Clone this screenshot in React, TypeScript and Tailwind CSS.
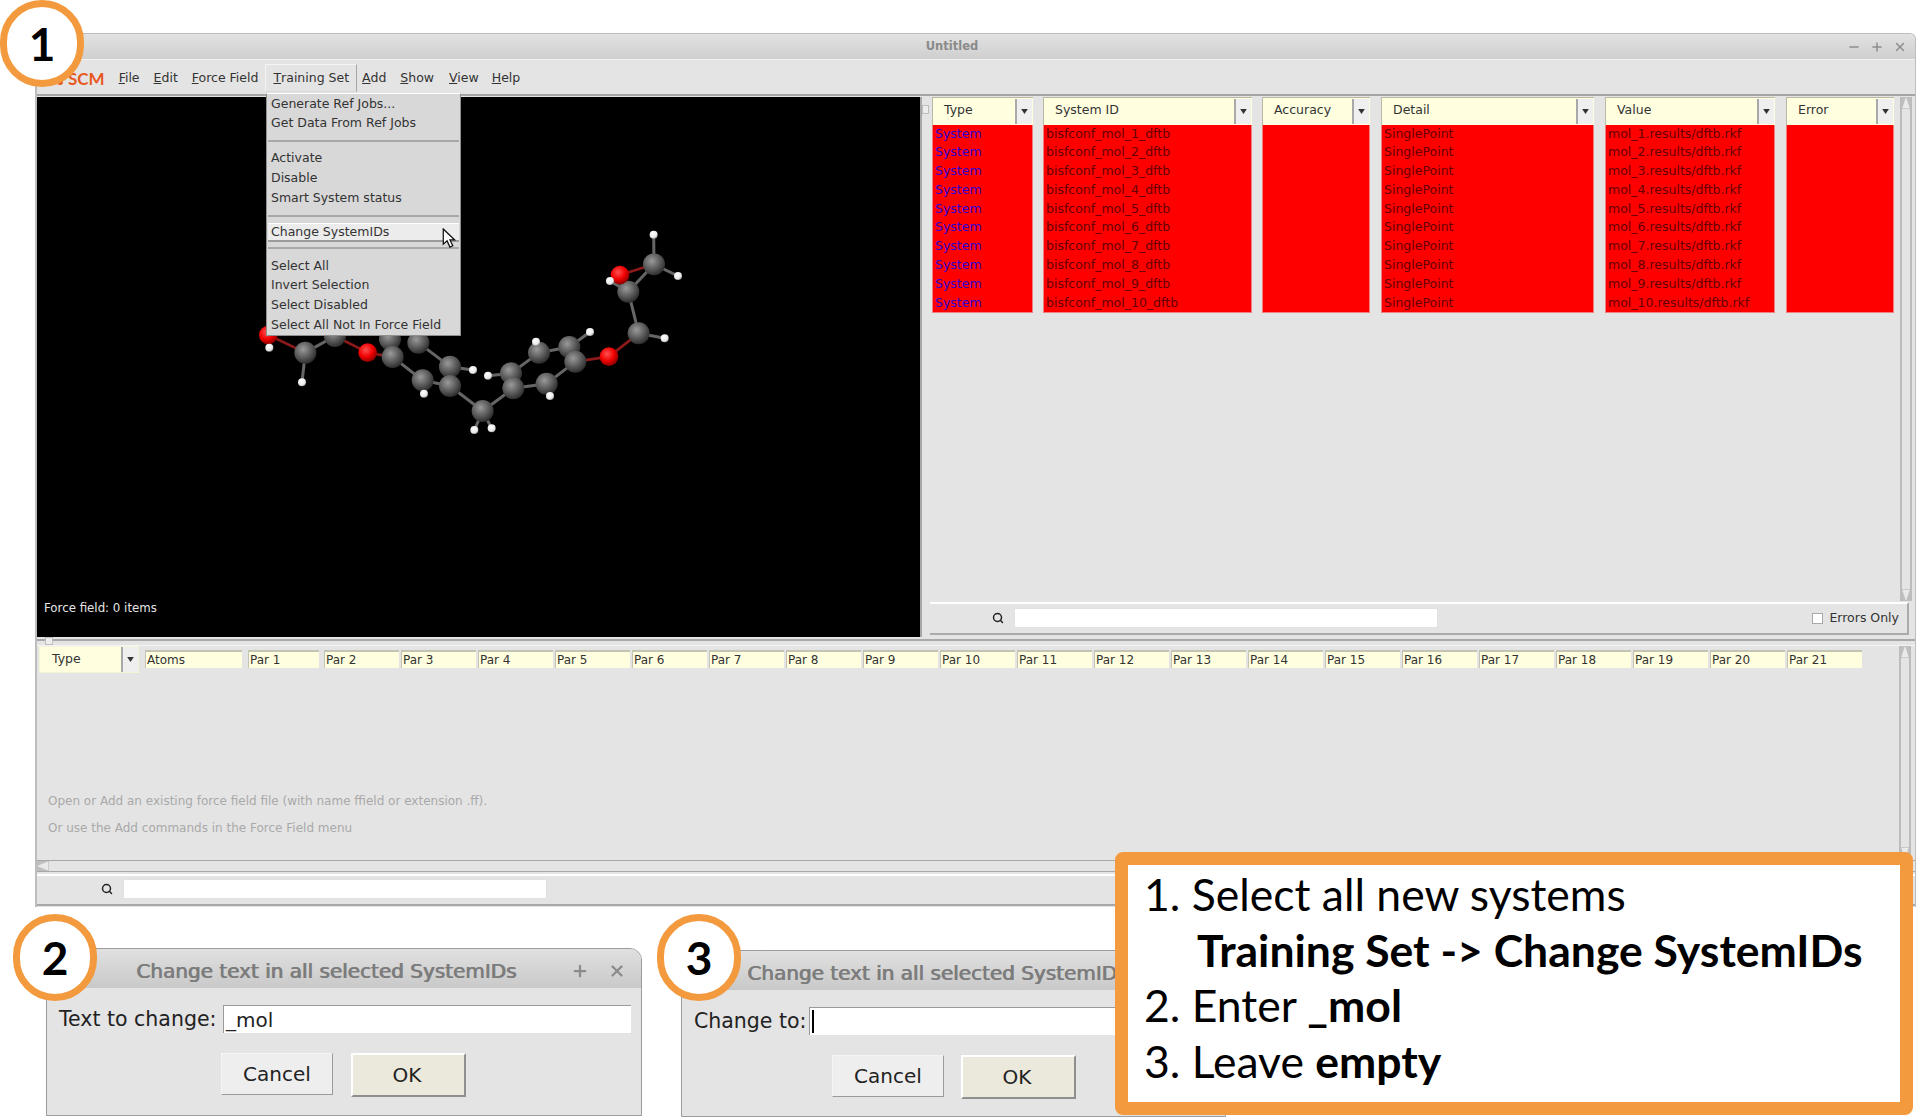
import React from 'react';
import { Search, Minus, Plus, X } from 'lucide-react';

const columns = [
  { label: 'Type', width: 'w-[101px]', gap: '', text: (i: number) => 'System', tone: 'text-[#2f00d0]' },
  { label: 'System ID', width: 'w-[209px]', gap: 'ml-[10px]', text: (i: number) => `bisfconf_mol_${i}_dftb`, tone: 'text-[#650000]' },
  { label: 'Accuracy', width: 'w-[108px]', gap: 'ml-[10px]', text: (i: number) => '', tone: 'text-[#650000]' },
  { label: 'Detail', width: 'w-[213px]', gap: 'ml-[11px]', text: (i: number) => 'SinglePoint', tone: 'text-[#650000]' },
  { label: 'Value', width: 'w-[170px]', gap: 'ml-[11px]', text: (i: number) => `mol_${i}.results/dftb.rkf`, tone: 'text-[#650000]' },
  { label: 'Error', width: 'w-[108px]', gap: 'ml-[11px]', text: (i: number) => '', tone: 'text-[#650000]' },
];

const rows = [1, 2, 3, 4, 5, 6, 7, 8, 9, 10];
const pars = Array.from({ length: 20 }, (_, i) => `Par ${i + 2}`);

const menuBar = [
  { first: 'F', rest: 'ile', cls: 'ml-[14px]' },
  { first: 'E', rest: 'dit', cls: 'ml-[14px]' },
  { first: 'F', rest: 'orce Field', cls: 'ml-[14px]' },
];
const menuBarRight = [
  { first: 'A', rest: 'dd', cls: 'ml-[5px]' },
  { first: 'S', rest: 'how', cls: 'ml-[14px]' },
  { first: 'V', rest: 'iew', cls: 'ml-[15px]' },
  { first: 'H', rest: 'elp', cls: 'ml-[13px]' },
];

const carbons = [
  [315, 405], [480, 415], [565, 425], [1272, 190], [1195, 272], [1226, 397], [1018, 438], [1036, 482], [927, 455], [950, 548],
  [843, 517], [850, 562], [758, 630], [660, 497], [660, 555], [578, 538], [488, 468], [226, 455],
];
const oxygens = [[1170, 222], [1137, 467], [413, 455], [115, 402]];
const hydrogens = [
  [1271, 101], [1344, 225], [1140, 240], [1304, 412], [1080, 393], [918, 422], [960, 585], [774, 524], [733, 687],
  [785, 682], [582, 578], [729, 507], [216, 544], [118, 440],
];
const greyBonds = [
  [1272, 190, 1271, 101], [1272, 190, 1344, 225], [1272, 190, 1195, 272], [1195, 272, 1140, 240], [1195, 272, 1226, 397],
  [1226, 397, 1304, 412], [1036, 482, 1018, 438], [1018, 438, 1080, 393], [1018, 438, 927, 455], [927, 455, 918, 422],
  [927, 455, 843, 517], [1036, 482, 950, 548], [950, 548, 960, 585], [950, 548, 850, 562], [843, 517, 850, 562],
  [843, 517, 774, 524], [850, 562, 758, 630], [758, 630, 733, 687], [758, 630, 785, 682], [758, 630, 660, 555],
  [660, 555, 660, 497], [660, 497, 729, 507], [660, 497, 565, 425], [660, 555, 578, 538], [578, 538, 582, 578],
  [578, 538, 488, 468], [488, 468, 480, 415], [226, 455, 216, 544], [226, 455, 315, 405], [115, 402, 118, 440],
];
const redBonds = [
  [1170, 222, 1272, 190], [1170, 222, 1195, 272], [1137, 467, 1226, 397], [1137, 467, 1036, 482], [413, 455, 315, 405],
  [413, 455, 488, 468], [115, 402, 226, 455],
];

function Triangle({ dir, className }: { dir: 'up' | 'down' | 'left'; className: string }) {
  const points = dir === 'up' ? '5.5,1 10,10 1,10' : dir === 'down' ? '1,1 10,1 5.5,10' : '10,1 10,10 1,5.5';
  return (
    <svg viewBox="0 0 11 11" preserveAspectRatio="none" className={`bg-[#bfbfbf] ${className}`} aria-hidden="true">
      <polygon points={points} fill="#e9e9e9" stroke="#f4f4f4" strokeWidth="0.6" />
    </svg>
  );
}

function HeaderArrow() {
  return (
    <div className="flex h-full w-[17px] shrink-0 items-center justify-center border-l-2 border-l-[#a9a9a9] bg-[#efefef]">
      <svg viewBox="0 0 8 6" className="h-[5px] w-[7px]" aria-hidden="true">
        <polygon points="0,0 8,0 4,6" fill="#333333" />
      </svg>
    </div>
  );
}

function TableColumn({ col }: { col: (typeof columns)[number] }) {
  return (
    <div className={`${col.width} ${col.gap} shrink-0`}>
      <div className="flex h-[28px] items-stretch border-t border-l border-[#b9b9a5] bg-[#ffffe0] py-[1px] pl-[11px] pr-[1px]">
        <div className="flex flex-1 items-center pb-[2px] text-[12.5px] text-[#333333]">{col.label}</div>
        <HeaderArrow />
      </div>
      <div className="h-[188px] border border-t-0 border-[#f08080] bg-[#ff0000] pl-[2px]">
        {rows.map((n) => (
          <div key={n} className={`h-[18.8px] whitespace-nowrap text-[12.5px] leading-[18.8px] ${col.tone}`}>
            {col.text(n)}
          </div>
        ))}
      </div>
    </div>
  );
}

function Molecule() {
  return (
    <svg viewBox="0 0 1440 720" className="absolute left-[193px] top-[104px] h-[240px] w-[480px]" aria-hidden="true">
      <defs>
        <radialGradient id="carbon" cx="40%" cy="35%" r="70%">
          <stop offset="0%" stopColor="#9a9a9a" />
          <stop offset="60%" stopColor="#555555" />
          <stop offset="100%" stopColor="#262626" />
        </radialGradient>
        <radialGradient id="oxygen" cx="40%" cy="35%" r="70%">
          <stop offset="0%" stopColor="#ff5050" />
          <stop offset="55%" stopColor="#f00000" />
          <stop offset="100%" stopColor="#7a0000" />
        </radialGradient>
        <radialGradient id="hydrogen" cx="40%" cy="35%" r="70%">
          <stop offset="0%" stopColor="#ffffff" />
          <stop offset="70%" stopColor="#e8e8e8" />
          <stop offset="100%" stopColor="#8a8a8a" />
        </radialGradient>
      </defs>
      {greyBonds.map((b, i) => (
        <line key={i} x1={b[0]} y1={b[1]} x2={b[2]} y2={b[3]} stroke="#666666" strokeWidth="9" />
      ))}
      {redBonds.map((b, i) => (
        <line key={i} x1={b[0]} y1={b[1]} x2={b[2]} y2={b[3]} stroke="#8c1a1a" strokeWidth="8" />
      ))}
      {carbons.map((a, i) => (
        <circle key={i} cx={a[0]} cy={a[1]} r="33" fill="url(#carbon)" />
      ))}
      {oxygens.map((a, i) => (
        <circle key={i} cx={a[0]} cy={a[1]} r="28" fill="url(#oxygen)" />
      ))}
      {hydrogens.map((a, i) => (
        <circle key={i} cx={a[0]} cy={a[1]} r="12" fill="url(#hydrogen)" />
      ))}
    </svg>
  );
}

function MenuEntry({ label, active }: { label: string; active?: boolean }) {
  return (
    <div
      className={
        active
          ? 'mx-[1px] flex h-[19px] items-center border-t border-b-2 border-t-white border-b-[#9c9c9c] bg-[#ececec] pl-[3px] text-[12.5px] text-[#333333]'
          : 'flex h-[19.8px] items-center pl-[4px] text-[12.5px] text-[#333333]'
      }
    >
      {label}
    </div>
  );
}

function MenuDivider({ className }: { className: string }) {
  return <div className={`mx-[1px] border-t-2 border-[#a8a8a8] ${className}`} />;
}

function TrainingSetMenu() {
  return (
    <div className="absolute left-[266px] top-[93px] z-10 h-[243px] w-[195px] border border-[#8f8f8f] border-t-white bg-[#d8d8d8]">
      <MenuEntry label="Generate Ref Jobs..." />
      <MenuEntry label="Get Data From Ref Jobs" />
      <MenuDivider className="mb-[7px] mt-[6px]" />
      <MenuEntry label="Activate" />
      <MenuEntry label="Disable" />
      <MenuEntry label="Smart System status" />
      <MenuDivider className="mb-[6px] mt-[7px]" />
      <MenuEntry label="Change SystemIDs" active />
      <MenuDivider className="mb-[7px] mt-[5px]" />
      <MenuEntry label="Select All" />
      <MenuEntry label="Invert Selection" />
      <MenuEntry label="Select Disabled" />
      <MenuEntry label="Select All Not In Force Field" />
      <svg viewBox="0 0 14 22" className="absolute left-[175px] top-[134px] h-[21px] w-[14px]" aria-hidden="true">
        <path d="M1 1 L1 17 L5 13.5 L8 20 L11 18.6 L8 12.5 L13 12.5 Z" fill="#ffffff" stroke="#111111" strokeWidth="1.3" />
      </svg>
    </div>
  );
}

function SearchInput({ inputClass }: { inputClass: string }) {
  return (
    <>
      <Search className="h-[12px] w-[12px] shrink-0 text-[#222222]" strokeWidth={3} aria-hidden="true" />
      <div className={`h-[20px] border border-[#e4e0e0] bg-white ${inputClass}`} />
    </>
  );
}

function MainWindow() {
  return (
    <div className="flex h-[874px] w-[1881px] flex-col overflow-hidden rounded-tr-[6px] border-t border-r border-l-2 border-[#bdbdbd] bg-[#e4e4e4]">
      {/* title bar */}
      <div className="flex h-[25px] shrink-0 items-center bg-gradient-to-b from-[#e2e2e2] to-[#cfcfcf] pr-[8px]">
        <div className="flex-1 pl-[20px] text-center text-[11.5px] font-bold text-[#8a8a8a]">Untitled</div>
        <div className="flex items-center gap-[9px] text-[#8c8c8c]">
          <Minus className="h-[14px] w-[14px]" strokeWidth={2.5} aria-hidden="true" />
          <Plus className="h-[14px] w-[14px]" strokeWidth={2.5} aria-hidden="true" />
          <X className="h-[14px] w-[14px]" strokeWidth={2.5} aria-hidden="true" />
        </div>
      </div>

      {/* menu bar */}
      <div className="flex h-[36.5px] shrink-0 items-center border-t border-b-2 border-t-[#f2f2f2] border-b-[#a5a5a5] pt-[3px] text-[12.5px] text-[#333333]">
        <div className="ml-[31px] flex items-center">
          <span className="font-['Lato',sans-serif] text-[17px] font-bold text-[#e8591f]">SCM</span>
        </div>
        {menuBar.map((m) => (
          <span key={m.rest} className={m.cls}>
            <span className="underline">{m.first}</span>
            {m.rest}
          </span>
        ))}
        <div className="ml-[7px] flex h-[28px] items-center border border-[#f4f4f4] border-r-[#a5a5a5] border-b-[#d8d8d8] px-[7px]">
          <span className="underline">T</span>raining Set
        </div>
        {menuBarRight.map((m) => (
          <span key={m.rest} className={m.cls}>
            <span className="underline">{m.first}</span>
            {m.rest}
          </span>
        ))}
      </div>

      {/* upper area */}
      <div className="flex h-[541px] shrink-0 pt-[1px]">
        <div className="relative w-[883px] shrink-0 bg-black">
          <Molecule />
          <div className="absolute bottom-[19px] left-[7px] text-[11.8px] text-[#e6e6e6]">Force field: 0 items</div>
        </div>
        <div className="relative w-[12px] shrink-0 border-l-2 border-l-[#a8a8a8]">
          <div className="absolute left-0 top-[8px] h-[9px] w-[7px] border border-[#bdbdbd] bg-[#ededed]" />
        </div>
        <div className="flex min-w-0 flex-1 flex-col pb-[2px]">
          <div className="flex flex-1">
            <div className="flex w-[968px] shrink-0 items-start">
              {columns.map((c) => (
                <TableColumn key={c.label} col={c} />
              ))}
            </div>
            <div className="flex w-[12px] shrink-0 flex-col border-x-2 border-[#bcbcbc]">
              <Triangle dir="up" className="h-[12px] w-[8px]" />
              <div className="flex-1" />
              <Triangle dir="down" className="h-[12px] w-[8px]" />
            </div>
          </div>
          <div className="-ml-[2px] mr-[6px] mt-[1px] flex h-[33px] shrink-0 items-center border-t-2 border-r-2 border-b-2 border-t-white border-r-[#aaaaaa] border-b-[#aaaaaa]">
            <div className="ml-[62px] flex items-center gap-[10px]">
              <SearchInput inputClass="w-[424px]" />
            </div>
            <div className="ml-auto mr-[8px] flex items-center gap-[6px] text-[12.5px] text-[#333333]">
              <div className="h-[11px] w-[11px] border border-[#a8a8a8] bg-white" />
              Errors Only
            </div>
          </div>
        </div>
      </div>

      {/* splitter */}
      <div className="relative h-[9px] shrink-0 border-b border-[#f4f4f4]">
        <div className="mt-[2px] border-t-2 border-[#a9a9a9]" />
        <div className="absolute left-[8px] top-0 h-[8px] w-[8px] border border-[#bdbdbd] bg-[#ededed]" />
      </div>

      {/* lower area */}
      <div className="flex min-h-0 flex-1 flex-col">
        <div className="flex min-h-0 flex-1">
          <div className="flex min-w-0 flex-1 flex-col">
            <div className="flex items-start pl-[2px]">
              <div className="flex h-[27px] w-[100px] shrink-0 items-stretch border border-[#f4f4d8] bg-[#ffffe0] pl-[12px]">
                <div className="flex flex-1 items-center text-[12.5px] text-[#333333]">Type</div>
                <HeaderArrow />
              </div>
              <div className="ml-[6px] mt-[4px] flex h-[18px] w-[97px] shrink-0 items-center border-t-2 border-l border-[#c4c4b4] bg-[#ffffe0] pl-[1px] text-[12px] text-[#333333]">
                Atoms
              </div>
              <div className="ml-[6px] mt-[4px] flex h-[18px] w-[71px] shrink-0 items-center border-t-2 border-l border-[#c4c4b4] bg-[#ffffe0] pl-[1px] text-[12px] text-[#333333]">
                Par 1
              </div>
              <div className="ml-[5px] mt-[4px] flex gap-[2px]">
                {pars.map((p) => (
                  <div key={p} className="flex h-[18px] w-[75px] shrink-0 items-center border-t-2 border-l border-[#c4c4b4] bg-[#ffffe0] pl-[1px] text-[12px] text-[#333333]">
                    {p}
                  </div>
                ))}
              </div>
            </div>
            <div className="flex flex-1 flex-col justify-end gap-[11px] pb-[24px] pl-[11px] text-[12px] leading-[16px] text-[#a9a9a9]">
              <div>Open or Add an existing force field file (with name ffield or extension .ff).</div>
              <div>Or use the Add commands in the Force Field menu</div>
            </div>
          </div>
          <div className="mr-[4px] flex w-[12px] shrink-0 flex-col border-x-2 border-[#bcbcbc]">
            <Triangle dir="up" className="h-[12px] w-[8px]" />
            <div className="flex-1" />
            <Triangle dir="down" className="mb-[1px] h-[12px] w-[8px]" />
          </div>
        </div>
        <div className="h-[12px] shrink-0 border-y border-[#a8a8a8]">
          <Triangle dir="left" className="h-[10px] w-[12px]" />
        </div>
        <div className="mb-[1px] mt-[2px] flex h-[32px] shrink-0 items-center border-y-2 border-t-white border-b-[#a8a8a8] pb-[2px]">
          <div className="ml-[64px] flex items-center gap-[10px]">
            <SearchInput inputClass="w-[424px]" />
          </div>
        </div>
      </div>
    </div>
  );
}

function DialogButton({ label, isDefault }: { label: string; isDefault?: boolean }) {
  return (
    <div
      className={
        isDefault
          ? 'flex h-[44px] w-[115px] items-center justify-center border-2 border-t-white border-l-white border-r-[#8f8f8f] border-b-[#8f8f8f] bg-[#ebe8dc] pr-[3px] text-[20px] text-[#222222]'
          : 'flex h-[42px] w-[112px] items-center justify-center border border-t-[#f4f4f4] border-l-[#f4f4f4] border-r-[#9a9a9a] border-b-[#9a9a9a] bg-[#eeeeee] text-[20px] text-[#222222]'
      }
    >
      {label}
    </div>
  );
}

function ChangeDialog({
  label,
  value,
  position,
  titleInset,
  rowInset,
  labelWidth,
  buttonsInset,
  buttonGap,
  controls,
  caret,
}: {
  label: string;
  value: string;
  position: string;
  titleInset: string;
  rowInset: string;
  labelWidth: string;
  buttonsInset: string;
  buttonGap: string;
  controls?: boolean;
  caret?: boolean;
}) {
  return (
    <div className={`absolute overflow-hidden rounded-tr-[12px] rounded-tl-[6px] border border-[#9c9c9c] bg-[#e4e4e4] ${position}`}>
      <div className={`flex h-[39px] items-center bg-gradient-to-b from-[#e0e0e0] to-[#c9c9c9] pt-[4px] ${titleInset}`}>
        <div className="whitespace-nowrap text-[20px] text-[#7c7c7c] [text-shadow:0.9px_0_0_#7c7c7c]">Change text in all selected SystemIDs</div>
        {controls && (
          <div className="ml-auto mr-[15px] flex items-center gap-[19px] text-[#8c8c8c]">
            <Plus className="h-[18px] w-[18px]" strokeWidth={3} aria-hidden="true" />
            <X className="h-[18px] w-[18px]" strokeWidth={3} aria-hidden="true" />
          </div>
        )}
      </div>
      <div className={`mt-[17px] flex h-[28px] items-center ${rowInset}`}>
        <div className={`shrink-0 text-[20.5px] text-[#222222] ${labelWidth}`}>{label}</div>
        <div className="flex h-[28px] flex-1 items-center border-t border-l border-[#9a9a9a] bg-white pl-[2px] text-[20px] text-[#222222]">
          {caret && <div className="h-[23px] w-[2px] bg-black" />}
          {value}
        </div>
      </div>
      <div className={`mt-[20px] flex items-start ${buttonsInset} ${buttonGap}`}>
        <DialogButton label="Cancel" />
        <DialogButton label="OK" isDefault />
      </div>
    </div>
  );
}

function StepBadge({ n, position }: { n: string; position: string }) {
  return (
    <div className={`absolute z-20 flex h-[87px] w-[84px] items-center justify-center rounded-full border-[7px] border-[#f39a3e] bg-white font-['Lato',sans-serif] text-[46px] font-bold text-black ${position}`}>
      {n}
    </div>
  );
}

export default function App() {
  return (
    <div className="relative h-[1117px] w-[1917px] overflow-hidden bg-white pl-[35px] pt-[33px] font-['DejaVu_Sans',sans-serif]">
      <MainWindow />
      <div className="absolute left-[57px] top-[79px] z-10 h-[6px] w-[6px] rounded-full bg-[#e8591f]" />
      <TrainingSetMenu />

      <ChangeDialog
        label="Text to change:"
        value="_mol"
        position="left-[46px] top-[948px] h-[168px] w-[596px]"
        titleInset="pl-[89px]"
        rowInset="pl-[12px] pr-[10px]"
        labelWidth="w-[164px]"
        buttonsInset="pl-[174px]"
        buttonGap="gap-[18px]"
        controls
      />
      <ChangeDialog
        label="Change to:"
        value=""
        position="left-[681px] top-[950px] h-[167px] w-[545px]"
        titleInset="pl-[65px]"
        rowInset="pl-[12px] pr-[10px]"
        labelWidth="w-[115px]"
        buttonsInset="pl-[150px]"
        buttonGap="gap-[17px]"
        caret
      />

      <StepBadge n="1" position="left-0 top-0" />
      <StepBadge n="2" position="left-[13px] top-[914px]" />
      <StepBadge n="3" position="left-[657px] top-[914px]" />

      <div className="absolute left-[1115px] top-[852px] z-30 h-[263px] w-[798px] rounded-[8px] border-[13px] border-[#f39a3e] bg-white pl-[16px] pt-[1px] font-['Lato',sans-serif] text-[44.5px] leading-[55.5px] text-black">
        <div>1. Select all new systems</div>
        <div className="pl-[53px] font-bold">{'Training Set -> Change SystemIDs'}</div>
        <div>
          2. Enter <span className="font-bold">_mol</span>
        </div>
        <div>
          3. Leave <span className="font-bold">empty</span>
        </div>
      </div>
    </div>
  );
}
